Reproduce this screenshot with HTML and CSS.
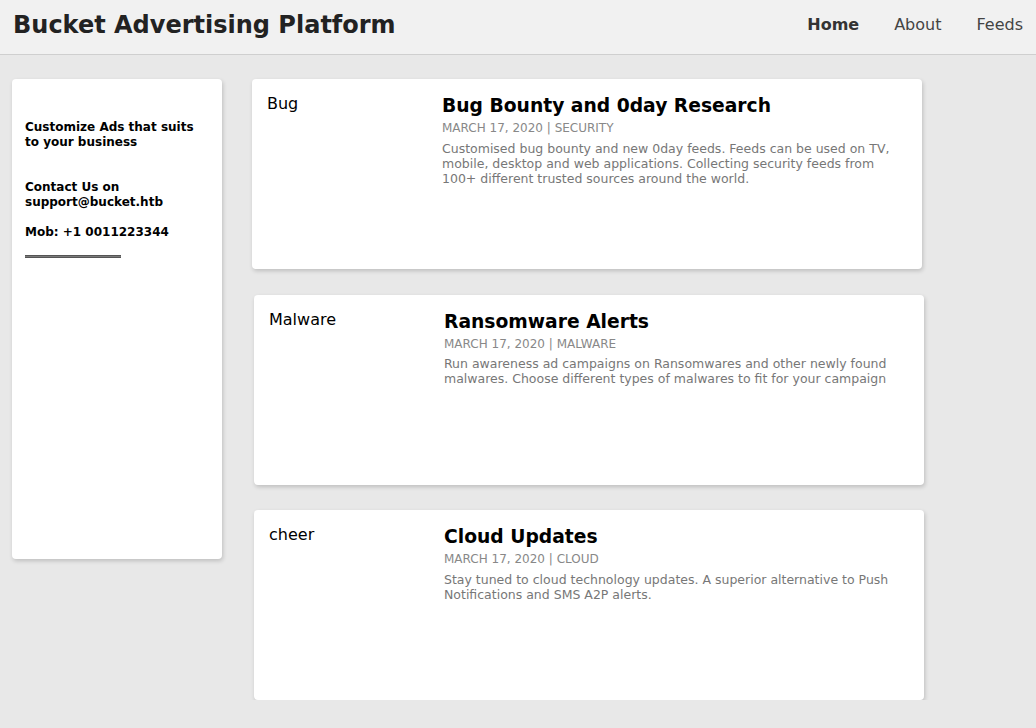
FILE: index.html
```html
<!DOCTYPE html>
<html>
<head>
<meta charset="utf-8">
<title>Bucket Advertising Platform</title>
<link rel="stylesheet" href="styles.css">
</head>
<body>
<header class="topbar">
  <div class="brand">Bucket Advertising Platform</div>
  <nav class="nav">
    <a class="nav-link active" href="#">Home</a>
    <a class="nav-link" href="#">About</a>
    <a class="nav-link" href="#">Feeds</a>
  </nav>
</header>
<div class="layout">
  <aside class="sidebar">
    <p class="side-text first">Customize Ads that suits<br>to your business</p>
    <p class="side-text contact">Contact Us on<br>support@bucket.htb</p>
    <p class="side-text mob">Mob: +1 0011223344</p>
    <div class="side-rule"></div>
  </aside>
  <main class="feed">
    <article class="card shift">
      <div class="card-label">Bug</div>
      <div class="card-body">
        <h3 class="card-title">Bug Bounty and 0day Research</h3>
        <div class="card-meta">MARCH 17, 2020 | SECURITY</div>
        <p class="card-desc">Customised bug bounty and new 0day feeds. Feeds can be used on TV, mobile, desktop and web applications. Collecting security feeds from 100+ different trusted sources around the world.</p>
      </div>
    </article>
    <article class="card">
      <div class="card-label">Malware</div>
      <div class="card-body">
        <h3 class="card-title">Ransomware Alerts</h3>
        <div class="card-meta">MARCH 17, 2020 | MALWARE</div>
        <p class="card-desc">Run awareness ad campaigns on Ransomwares and other newly found malwares. Choose different types of malwares to fit for your campaign</p>
      </div>
    </article>
    <article class="card">
      <div class="card-label">cheer</div>
      <div class="card-body">
        <h3 class="card-title">Cloud Updates</h3>
        <div class="card-meta">MARCH 17, 2020 | CLOUD</div>
        <p class="card-desc">Stay tuned to cloud technology updates. A superior alternative to Push Notifications and SMS A2P alerts.</p>
      </div>
    </article>
  </main>
</div>
</body>
</html>
```
FILE: styles.css
```css
html, body {
  margin: 0;
  padding: 0;
}
body {
  background: #e8e8e8;
  font-family: "DejaVu Sans", Verdana, sans-serif;
  color: #000;
}
.topbar {
  height: 54px;
  background: #f1f1f1;
  border-bottom: 1px solid #cfcfcf;
  display: flex;
  align-items: center;
  justify-content: space-between;
  padding: 0 13px;
}
.brand {
  font-size: 24px;
  font-weight: bold;
  color: #222;
  line-height: 30px;
  margin-top: -4px;
}
.nav {
  display: flex;
  gap: 35px;
  margin-top: -4px;
}
.nav-link {
  font-size: 16px;
  color: #444;
  text-decoration: none;
  line-height: 20px;
}
.nav-link.active {
  font-weight: bold;
  color: #333;
}
.layout {
  display: flex;
  align-items: flex-start;
  padding: 24px 12px 0 12px;
  gap: 30px;
}
.sidebar {
  width: 210px;
  height: 480px;
  box-sizing: border-box;
  flex: none;
  background: #fff;
  border-radius: 4px;
  box-shadow: 1px 2px 4px rgba(0, 0, 0, 0.18);
  padding: 40.5px 13px 13px 13px;
}
.side-text {
  margin: 0;
  font-size: 12px;
  line-height: 15px;
  font-weight: bold;
  color: #000;
}
.side-text.contact {
  margin-top: 30px;
}
.side-text.mob {
  margin-top: 15px;
}
.side-rule {
  margin-top: 15px;
  width: 96px;
  height: 1px;
  background: #7a7a7a;
  border-top: 1px solid #555;
  border-bottom: 1px solid #555;
}
.feed {
  display: flex;
  flex-direction: column;
  gap: 25.5px;
}
.card {
  width: 670px;
  height: 190px;
  box-sizing: border-box;
  background: #fff;
  border-radius: 4px;
  box-shadow: 1px 2px 4px rgba(0, 0, 0, 0.18);
  padding: 15px;
  display: flex;
  margin-left: 2px;
}
.card.shift {
  margin-left: 0;
}
.card-label {
  width: 175px;
  flex: none;
  font-size: 16px;
  line-height: 19px;
  color: #000;
}
.card-body {
  flex: 1;
}
.card-title {
  margin: 1px 0 0 0;
  font-size: 18.72px;
  line-height: 22px;
  font-weight: bold;
  color: #000;
}
.card-meta {
  margin-top: 4px;
  font-size: 12px;
  line-height: 14px;
  color: #888;
}
.card-desc {
  margin: 5.5px 0 0 0;
  font-size: 12.5px;
  line-height: 15px;
  color: #777;
}
```
